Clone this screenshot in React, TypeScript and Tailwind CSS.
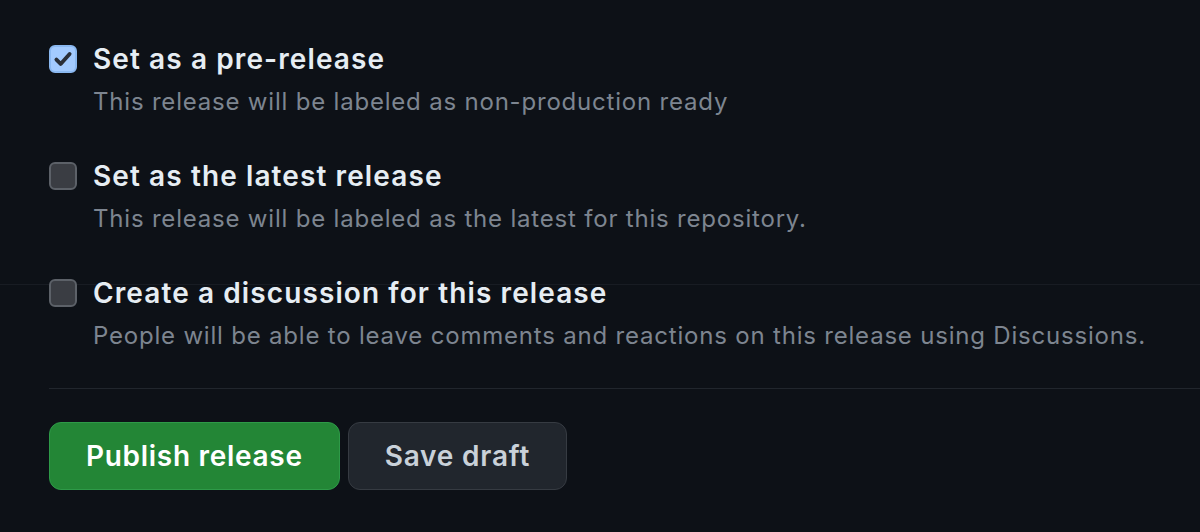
import { useState } from 'react';

type Option = {
  title: string;
  note: string;
  checked: boolean;
};

const initialOptions: Option[] = [
  {
    title: 'Set as a pre-release',
    note: 'This release will be labeled as non-production ready',
    checked: true,
  },
  {
    title: 'Set as the latest release',
    note: 'This release will be labeled as the latest for this repository.',
    checked: false,
  },
  {
    title: 'Create a discussion for this release',
    note: 'People will be able to leave comments and reactions on this release using Discussions.',
    checked: false,
  },
];

function Checkbox({ checked, onClick }: { checked: boolean; onClick: () => void }) {
  return (
    <button
      type="button"
      onClick={onClick}
      className={`mt-[6px] flex h-[28px] w-[28px] shrink-0 items-center justify-center rounded-[6px] border-2 ${
        checked ? 'border-[#8ab8f0] bg-[#a3cbff]' : 'border-[#5c6168] bg-[#3a3d43]'
      }`}
    >
      {checked && (
        <svg viewBox="0 0 16 16" className="h-[22px] w-[22px]" fill="none">
          <path
            d="M3.2 8.4l3.1 3.2L12.8 4.4"
            stroke="#2a2f38"
            strokeWidth="2.8"
            strokeLinecap="round"
            strokeLinejoin="round"
          />
        </svg>
      )}
    </button>
  );
}

export default function App() {
  const [options, setOptions] = useState(initialOptions);

  const toggle = (index: number) =>
    setOptions(options.map((o, i) => (i === index ? { ...o, checked: !o.checked } : o)));

  return (
    <div
      className="relative h-[532px] w-[1200px] overflow-hidden bg-[#0d1117] pl-[49px] pt-[39px]"
      style={{ fontFamily: 'Inter, "Noto Sans", sans-serif' }}
    >
      {/* faint seam across the page */}
      <div className="absolute left-0 right-0 top-[284px] h-px bg-[#181c23]" />

      <div className="relative flex flex-col gap-[36px]">
        {options.map((option, index) => (
          <div key={option.title} className="flex gap-[16px]">
            <Checkbox checked={option.checked} onClick={() => toggle(index)} />
            <div>
              <div className="text-[28px] font-semibold leading-[40px] tracking-[1.1px] text-[#e6edf3]">
                {option.title}
              </div>
              <div className="mt-[5px] text-[24px] leading-[36px] tracking-[0.8px] text-[#7d8590]">
                {option.note}
              </div>
            </div>
          </div>
        ))}
      </div>

      <div className="relative mt-[34px] h-px bg-[#21262d]" />

      <div className="relative mt-[33px] flex gap-[8px]">
        <button
          type="button"
          className="h-[68px] rounded-[12px] border border-[#2e9a48] bg-[#238636] px-[36px] text-[28px] font-semibold tracking-[0.7px] text-white"
        >
          Publish release
        </button>
        <button
          type="button"
          className="h-[68px] rounded-[12px] border border-[#363b42] bg-[#21262d] px-[36px] text-[28px] font-semibold tracking-[0.8px] text-[#c9d1d9]"
        >
          Save draft
        </button>
      </div>
    </div>
  );
}
